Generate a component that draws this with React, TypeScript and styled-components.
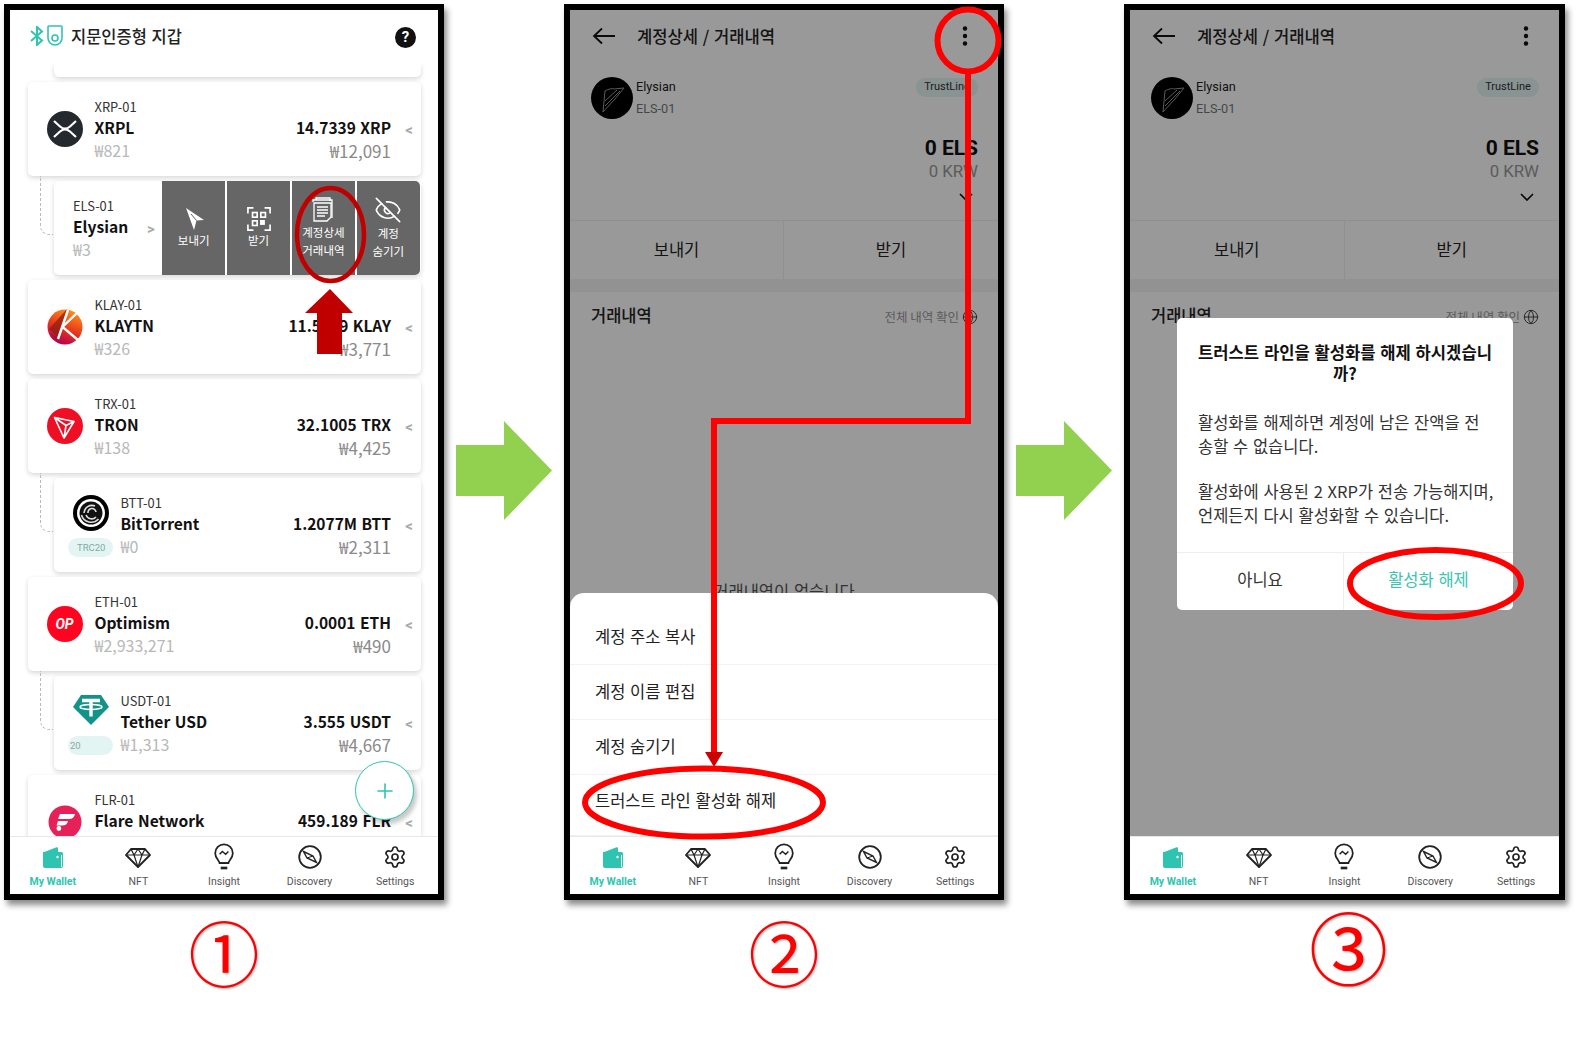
import React from "react";
import styled, { createGlobalStyle } from "styled-components";
import { EyeOff, Settings, Plus, Globe } from "lucide-react";

const KR = `"Noto Sans CJK KR", "Noto Sans", sans-serif`;
const RB = `Roboto, "Noto Sans CJK KR", sans-serif`;
const TEAL = "#2fc4b2";

const Global = createGlobalStyle`
  html, body { margin: 0; padding: 0; background: #fff; overflow: hidden; }
  * { box-sizing: border-box; }
`;

const Stage = styled.div`
  position: relative;
  width: 1578px;
  height: 1042px;
  padding: 4px;
  display: flex;
  align-items: flex-start;
  gap: 12px;
  background: #fff;
  font-family: ${KR};
  word-spacing: 1px;
`;
const Column = styled.div`
  display: flex;
  flex-direction: column;
  align-items: center;
`;
const Phone = styled.div<{ $w?: number }>`
  width: ${(p) => p.$w ?? 440}px;
  height: 896px;
  border: 6px solid #000;
  background: #fff;
  box-shadow: 3px 5px 6px rgba(0, 0, 0, 0.45);
  display: flex;
  flex-direction: column;
  overflow: hidden;
`;
const Main = styled.div`
  position: relative;
  flex: 1;
  min-height: 0;
  display: flex;
  flex-direction: column;
  overflow: hidden;
`;
const Caption = styled.div<{ $size: number; $shift: number; $top: number }>`
  margin-top: ${(p) => p.$top}px;
  margin-left: ${(p) => p.$shift}px;
  font-family: ${KR};
  font-size: ${(p) => p.$size}px;
  line-height: 1;
  color: #f00;
  text-shadow: 1px 1px 2px rgba(0, 0, 0, 0.3);
`;
const FlowArrow = styled.svg`
  flex: none;
  margin-top: 417px;
`;

/* ---------- app bar ---------- */
const AppBar = styled.header`
  flex: none;
  height: 54px;
  display: flex;
  align-items: center;
  padding: 0 22px 3px 22px;
  background: #fff;
`;
const BrandTitle = styled.h1`
  flex: 1;
  margin: 0 0 0 8px;
  font-size: 16.5px;
  font-weight: 500;
  color: #222;
`;
const Help = styled.div`
  width: 21px;
  height: 21px;
  margin-top: 4px;
  border-radius: 50%;
  background: #111;
  color: #fff;
  font: 700 15px/21px ${RB};
  text-align: center;
`;
const BackTitle = styled.h1`
  flex: 1;
  margin: 0 0 0 21px;
  font-size: 16.6px;
  font-weight: 500;
  color: #222;
`;

/* ---------- list ---------- */
const List = styled.div`
  position: relative;
  flex: 1;
  min-height: 0;
  overflow: hidden;
  padding: 0 17px 0 18px;
  display: flex;
  flex-direction: column;
  gap: 5px;
`;
const Card = styled.div<{ $child?: boolean; $stub?: boolean }>`
  position: relative;
  flex: none;
  height: ${(p) => (p.$stub ? 13 : 94)}px;
  margin-left: ${(p) => (p.$child ? 26 : 0)}px;
  background: #fff;
  border-radius: ${(p) => (p.$stub ? "0 0 5px 5px" : "5px")};
  box-shadow: 0 2px 5px rgba(0, 0, 0, 0.16);
  display: flex;
  ${(p) =>
    p.$child && !p.$stub
      ? `&::before {
    content: "";
    position: absolute;
    left: -14px;
    top: -5px;
    width: 12px;
    height: 58px;
    border-left: 1px dashed #bbb;
    border-bottom: 1px dashed #bbb;
    border-bottom-left-radius: 9px;
  }`
      : ""}
`;
const IconCol = styled.div<{ $child?: boolean }>`
  flex: none;
  width: 66.5px;
  padding-left: ${(p) => (p.$child ? 14 : 18.5)}px;
  padding-top: ${(p) => (p.$child ? 17 : 29)}px;
  display: flex;
  flex-direction: column;
`;
const IconSlot = styled.div<{ $child?: boolean }>`
  width: 36px;
  height: 36px;
  margin-left: ${(p) => (p.$child ? 5 : 0)}px;
`;
const Badge = styled.div`
  width: 45px;
  height: 19px;
  margin-top: 7px;
  border-radius: 10px;
  background: #e3f5f3;
  color: #85a8a4;
  font: 400 9.5px/19px ${RB};
  padding-left: 9px;
`;
const BadgeShort = styled(Badge)`
  padding-left: 2px;
`;
const Info = styled.div`
  flex: 1;
  min-width: 0;
  padding-top: 16px;
`;
const Label = styled.div`
  font-size: 12.9px;
  line-height: 18px;
  color: #333;
`;
const Name = styled.div`
  font-size: 15.6px;
  font-weight: 700;
  line-height: 23px;
  color: #111;
`;
const Krw = styled.div`
  font-size: 16px;
  line-height: 22px;
  color: #b8b8b8;
`;
const Right = styled.div`
  flex: none;
  padding-top: 34px;
  text-align: right;
`;
const Amount = styled.div`
  font-size: 15.5px;
  font-weight: 700;
  line-height: 23px;
  color: #111;
`;
const SubValue = styled.div`
  font-size: 17px;
  line-height: 23px;
  color: #8a8a8a;
`;
const Chevron = styled.div`
  flex: none;
  width: 30px;
  padding: 36px 0 0 6px;
  text-align: center;
  font: 700 15px/24px ${RB};
  color: #aaa;
`;
const SwipeInfo = styled.div`
  flex: none;
  width: 93px;
  padding: 16px 0 0 19px;
`;
const SwipeChevron = styled.div`
  flex: none;
  width: 15px;
  padding-top: 36px;
  font: 700 15px/24px ${RB};
  color: #aaa;
`;
const Actions = styled.div`
  flex: 1;
  margin-right: 1px;
  display: grid;
  grid-template-columns: repeat(4, 1fr);
  gap: 1.5px;
`;
const Action = styled.div<{ $last?: boolean }>`
  background: #666;
  color: #fff;
  font-size: 11.5px;
  line-height: 17.5px;
  text-align: center;
  display: flex;
  flex-direction: column;
  align-items: center;
  justify-content: center;
  gap: 1px;
  border-radius: ${(p) => (p.$last ? "0 5px 5px 0" : "0")};
`;
const Fab = styled.div`
  position: absolute;
  left: 345px;
  top: 697px;
  width: 59px;
  height: 59px;
  border-radius: 50%;
  border: 1px solid ${TEAL};
  background: #fff;
  color: ${TEAL};
  box-shadow: 3px 4px 4px rgba(0, 0, 0, 0.22);
  display: flex;
  align-items: center;
  justify-content: center;
`;

/* ---------- nav ---------- */
const Nav = styled.nav`
  flex: none;
  height: 58px;
  display: grid;
  grid-template-columns: repeat(5, 1fr);
  background: #fff;
  border-top: 1px solid #e8e8e8;
  word-spacing: 0;
`;
const NavItem = styled.div<{ $active?: boolean }>`
  display: flex;
  flex-direction: column;
  align-items: center;
  padding-top: 7px;
  font-family: ${RB};
  font-size: 10.5px;
  line-height: 14px;
  font-weight: ${(p) => (p.$active ? 700 : 400)};
  color: ${(p) => (p.$active ? TEAL : "#555")};
`;
const NavIcon = styled.div`
  height: 26px;
  margin-bottom: 5px;
  display: flex;
  align-items: center;
  color: #222;
`;

/* ---------- detail ---------- */
const AccountRow = styled.div`
  flex: none;
  margin-top: 13px;
  padding: 0 20px 0 21px;
  display: flex;
  align-items: flex-start;
  height: 42px;
`;
const AccountText = styled.div`
  flex: 1;
  margin-left: 3px;
  font-family: ${RB};
`;
const AccountName = styled.div`
  font-size: 12.7px;
  line-height: 20px;
  color: #222;
`;
const AccountCode = styled.div`
  font-size: 12.7px;
  line-height: 24px;
  color: #777;
`;
const Pill = styled.div`
  margin-top: 1px;
  width: 62px;
  height: 19px;
  border-radius: 10px;
  background: #e3f5f3;
  color: #333;
  font: 400 11px/18px ${RB};
  text-align: center;
`;
const Balance = styled.div`
  flex: none;
  height: 101px;
  padding: 16px 20px 0 0;
  text-align: right;
  font-family: ${RB};
  word-spacing: 0;
`;
const BalanceMain = styled.div`
  font-size: 21px;
  font-weight: 700;
  line-height: 26px;
  color: #111;
`;
const BalanceSub = styled.div`
  font-size: 16.8px;
  line-height: 20px;
  color: #999;
`;
const BalanceChevron = styled.div`
  padding: 12px 5px 0 0;
  display: flex;
  justify-content: flex-end;
`;
const TwoButtons = styled.div`
  flex: none;
  height: 59px;
  display: grid;
  grid-template-columns: 1fr 1fr;
  border-top: 1px solid #eee;
  font-size: 16.5px;
  color: #222;
`;
const TwoButton = styled.div<{ $divider?: boolean }>`
  display: flex;
  align-items: center;
  justify-content: center;
  padding-bottom: 2px;
  border-right: ${(p) => (p.$divider ? "1px solid #eee" : "none")};
`;
const Band = styled.div`
  flex: none;
  height: 13px;
  background: #f3f3f3;
`;
const SectionHead = styled.div`
  flex: none;
  display: flex;
  align-items: center;
  justify-content: space-between;
  padding: 11px 20px 0 21px;
`;
const SectionTitle = styled.div`
  font-size: 16.5px;
  font-weight: 500;
  color: #222;
`;
const AllLink = styled.div`
  display: flex;
  align-items: center;
  gap: 3px;
  margin-top: 3px;
  font-size: 12.5px;
  word-spacing: 0;
  color: #999;
`;
const Empty = styled.div`
  flex: none;
  margin-top: 252px;
  text-align: center;
  font-size: 16.5px;
  color: #555;
`;
const Dim = styled.div`
  position: absolute;
  inset: 0;
  background: rgba(0, 0, 0, 0.4);
`;
const Sheet = styled.div`
  position: absolute;
  left: 0;
  right: 0;
  bottom: 0;
  height: 243px;
  background: #fff;
  border-radius: 14px 14px 0 0;
  padding-top: 17px;
  display: flex;
  flex-direction: column;
`;
const SheetRow = styled.div`
  flex: none;
  height: 55px;
  display: flex;
  align-items: center;
  padding: 0 0 3px 25px;
  font-size: 16.5px;
  color: #222;
  border-bottom: 1.5px solid #f2f2f2;
  &:last-child {
    flex: 1;
    padding-bottom: 11px;
  }
`;
const Dialog = styled.div`
  position: absolute;
  left: 47px;
  top: 308px;
  width: 336px;
  height: 292px;
  background: #fff;
  border-radius: 5px;
  display: flex;
  flex-direction: column;
`;
const DialogTitle = styled.div`
  padding: 24px 10px 0;
  text-align: center;
  font-size: 16.6px;
  font-weight: 700;
  line-height: 21px;
  color: #111;
`;
const DialogBody = styled.div`
  flex: 1;
  padding: 27px 10px 0 21px;
  font-size: 16.5px;
  line-height: 23.7px;
  color: #333;
`;
const Para = styled.p`
  margin: 0 0 22px;
`;
const DialogFoot = styled.div`
  flex: none;
  height: 58px;
  display: grid;
  grid-template-columns: 167px 1fr;
  border-top: 1px solid #eee;
  font-size: 16.5px;
`;
const FootBtn = styled.div<{ $primary?: boolean; $divider?: boolean }>`
  display: flex;
  align-items: center;
  justify-content: center;
  padding-bottom: 5px;
  color: ${(p) => (p.$primary ? "#3cc4b3" : "#333")};
  border-right: ${(p) => (p.$divider ? "1px solid #eee" : "none")};
`;
const Overlay = styled.svg`
  position: absolute;
  left: 0;
  top: 0;
  pointer-events: none;
`;
const OpCircle = styled.div`
  width: 36px;
  height: 36px;
  border-radius: 50%;
  background: #ff0420;
  color: #fff;
  font: italic 700 14px/36px ${RB};
  text-align: center;
`;

/* ---------- drawings ---------- */
const XrpLogo = () => (
  <svg width="36" height="36" viewBox="0 0 36 36">
    <circle cx="18" cy="18" r="18" fill="#23292f" />
    <path d="M7 10l6 5.5c3 2.7 7 2.7 10 0l6-5.5M7 26l6-5.5c3-2.7 7-2.7 10 0l6 5.5" fill="none" stroke="#fff" strokeWidth="2.2" />
  </svg>
);
const KlayLogo = () => (
  <svg width="36" height="36" viewBox="0 0 36 36">
    <defs>
      <linearGradient id="klayGrad" x1="0.8" y1="0" x2="0.4" y2="1">
        <stop offset="0" stopColor="#ff9a1f" />
        <stop offset="0.55" stopColor="#e8391a" />
        <stop offset="1" stopColor="#b5004e" />
      </linearGradient>
    </defs>
    <circle cx="18" cy="18" r="17.5" fill="url(#klayGrad)" />
    <path d="M2 20L20 0L11 28ZM4 24l7 5-3 1z" fill="#8f1d10" opacity=".75" />
    <path d="M21 1L11 30M30 4L15.5 18L31 31" fill="none" stroke="#fff" strokeWidth="2.4" />
  </svg>
);
const TronLogo = () => (
  <svg width="36" height="36" viewBox="0 0 36 36">
    <circle cx="18" cy="18" r="18" fill="#ef0f24" />
    <path d="M7.5 9.5L27 13.5L17 30ZM7.5 9.5L19 17.5L27 13.5M19 17.5L17 30" fill="none" stroke="#fff" strokeWidth="1.6" strokeLinejoin="round" />
  </svg>
);
const BttLogo = () => (
  <svg width="36" height="36" viewBox="0 0 36 36">
    <circle cx="18" cy="18" r="18" fill="#000" />
    <circle cx="18" cy="18" r="14" fill="#fff" />
    <circle cx="18" cy="18" r="11.5" fill="#111" />
    <path d="M8.5 20a10 10 0 0 0 17 4M11 18a8 8 0 0 1 11-7M13 20a6 6 0 0 0 10 2M15 18a4 4 0 0 1 8-1" fill="none" stroke="#ddd" strokeWidth="1.6" />
  </svg>
);
const UsdtLogo = () => (
  <svg width="36" height="36" viewBox="0 0 36 36">
    <path d="M8 2h20l8 12L18 32L0 14Z" fill="#12938a" />
    <path d="M9 7.5h18M18 7.5v16" stroke="#fff" strokeWidth="3.4" fill="none" />
    <ellipse cx="18" cy="14" rx="11" ry="2.4" fill="none" stroke="#fff" strokeWidth="1.5" />
  </svg>
);
const FlareLogo = () => (
  <svg width="36" height="36" viewBox="0 0 36 36">
    <circle cx="18" cy="18" r="16.5" fill="#e62058" />
    <path d="M13 10h15c-.6 3-2.5 5-6 5H11zM11 17h10c-.6 3-2.5 4.5-6 4.5H9.5zM9.5 24.5a2.4 2.4 0 1 0 4.8 0a2.4 2.4 0 1 0-4.8 0" fill="#fff" />
  </svg>
);
const ElysianLogo = () => (
  <svg width="42" height="42" viewBox="0 0 42 42" style={{ flex: "none" }}>
    <circle cx="21" cy="21" r="21" fill="#000" />
    <path d="M14 14c3-2 8-3 9-2l10-1-9 11-12 13zM14 24l12-11M14 29l15-15" fill="none" stroke="#999" strokeWidth="1" />
  </svg>
);
const SendIcon = () => (
  <svg width="24" height="24" viewBox="0 0 24 24">
    <path d="M4 1l18 12-7.5 .5L12 23z" fill="#fff" />
    <path d="M9 7l5.5 6.5" stroke="#666" strokeWidth="1" />
  </svg>
);
const QrIcon = () => (
  <svg width="24" height="24" viewBox="0 0 26 26" fill="none" stroke="#fff" strokeWidth="1.8">
    <path d="M1 7V1h6M19 1h6v6M25 19v6h-6M7 25H1v-6" />
    <rect x="6" y="6" width="5" height="5" />
    <rect x="15" y="6" width="5" height="5" />
    <rect x="6" y="15" width="5" height="5" />
    <rect x="15" y="15" width="3.5" height="3.5" fill="#fff" />
  </svg>
);
const DocsIcon = () => (
  <svg width="24" height="26" viewBox="0 0 24 26" fill="none" stroke="#fff" strokeWidth="1.3">
    <path d="M5 3V1h14v3M2 5V3h19v18" />
    <path d="M3 6h17v14l-4 4H3z" />
    <path d="M6 10h11M6 13h11M6 16h11M6 19h8" />
  </svg>
);
const BtIcon = () => (
  <svg width="15" height="20" viewBox="0 0 15 20" fill="none" stroke={TEAL} strokeWidth="2" style={{ marginLeft: -2 }}>
    <path d="M1 5l11 9.5L7 19V1l5 4.5L1 15" />
  </svg>
);
const DeviceIcon = () => (
  <svg width="16" height="21" viewBox="0 0 16 21" fill="none" stroke={TEAL} strokeWidth="1.6" style={{ marginLeft: 2 }}>
    <path d="M2 1h12a1 1 0 0 1 1 1v11a7 7 0 0 1-14 0V2a1 1 0 0 1 1-1z" />
    <circle cx="8" cy="13" r="3" />
  </svg>
);
const BackArrow = () => (
  <svg width="24" height="18" viewBox="0 0 24 18" fill="none" stroke="#111" strokeWidth="1.8" style={{ flex: "none" }}>
    <path d="M23 9H2M10 1.5L2 9l8 7.5" />
  </svg>
);
const Kebab = () => (
  <svg width="6" height="20" viewBox="0 0 6 20" fill="#111" style={{ marginRight: 8 }}>
    <circle cx="3" cy="2.5" r="2.2" />
    <circle cx="3" cy="10" r="2.2" />
    <circle cx="3" cy="17.5" r="2.2" />
  </svg>
);
const WalletIcon = () => (
  <svg width="22" height="23" viewBox="0 0 22 23">
    <path d="M1 6.5L14.5 1.2a1.2 1.2 0 0 1 1.5 1V7H1z" fill={TEAL} />
    <path d="M1 6h18.5a1.5 1.5 0 0 1 1.5 1.5V20a2 2 0 0 1-2 2H3a2 2 0 0 1-2-2z" fill={TEAL} />
    <path d="M19.5 9v12" stroke="#fff" strokeWidth="1" />
    <circle cx="15.5" cy="11" r="1.2" fill="#fff" />
  </svg>
);
const GemIcon = () => (
  <svg width="26" height="21" viewBox="0 0 26 21" fill="none" stroke="#222" strokeWidth="1.8" strokeLinejoin="round">
    <path d="M6 2h14l5 6-12 12L1 8z" />
    <path d="M1 8h24M9 8l4 12 4-12M6 2l3 6 4-6 4 6 3-6" strokeWidth="1.2" />
  </svg>
);
const BulbIcon = () => (
  <svg width="22" height="28" viewBox="0 0 20 25" fill="none" stroke="#222" strokeWidth="1.6">
    <path d="M6 18c0-2-4-4-4-9a8 8 0 0 1 16 0c0 5-4 7-4 9z" />
    <path d="M6 18h8" />
    <path d="M7 22.5h6" strokeWidth="2.4" />
    <path d="M6 10l2.5-2.5 3 2.5L14 7.5" strokeWidth="1.4" />
  </svg>
);
const CompassIcon = () => (
  <svg width="24" height="24" viewBox="0 0 24 24" fill="none" stroke="#222" strokeWidth="1.8">
    <circle cx="12" cy="12" r="10.8" />
    <path d="M5.5 6.5L15 11l3.5 6.5L9 13z" strokeWidth="1.4" />
    <path d="M9 13l6-2" strokeWidth="1" />
  </svg>
);

const BottomNav = () => (
  <Nav>
    <NavItem $active>
      <NavIcon><WalletIcon /></NavIcon>My Wallet
    </NavItem>
    <NavItem>
      <NavIcon><GemIcon /></NavIcon>NFT
    </NavItem>
    <NavItem>
      <NavIcon><BulbIcon /></NavIcon>Insight
    </NavItem>
    <NavItem>
      <NavIcon><CompassIcon /></NavIcon>Discovery
    </NavItem>
    <NavItem>
      <NavIcon><Settings size={24} strokeWidth={1.7} /></NavIcon>Settings
    </NavItem>
  </Nav>
);

type Row = {
  logo: React.ReactNode;
  label: string;
  name: string;
  krw: string;
  amount: string;
  value: string;
  child?: boolean;
  badge?: React.ReactNode;
};

const rowsBefore: Row[] = [
  { logo: <XrpLogo />, label: "XRP-01", name: "XRPL", krw: "₩821", amount: "14.7339 XRP", value: "₩12,091" },
];
const rowsAfter: Row[] = [
  { logo: <KlayLogo />, label: "KLAY-01", name: "KLAYTN", krw: "₩326", amount: "11.5579 KLAY", value: "₩3,771" },
  { logo: <TronLogo />, label: "TRX-01", name: "TRON", krw: "₩138", amount: "32.1005 TRX", value: "₩4,425" },
  { logo: <BttLogo />, label: "BTT-01", name: "BitTorrent", krw: "₩0", amount: "1.2077M BTT", value: "₩2,311", child: true, badge: <Badge>TRC20</Badge> },
  { logo: <OpCircle>OP</OpCircle>, label: "ETH-01", name: "Optimism", krw: "₩2,933,271", amount: "0.0001 ETH", value: "₩490" },
  { logo: <UsdtLogo />, label: "USDT-01", name: "Tether USD", krw: "₩1,313", amount: "3.555 USDT", value: "₩4,667", child: true, badge: <BadgeShort>20</BadgeShort> },
  { logo: <FlareLogo />, label: "FLR-01", name: "Flare Network", krw: "", amount: "459.189 FLR", value: "" },
];

const AssetCard = ({ r }: { r: Row }) => (
  <Card $child={r.child}>
    <IconCol $child={r.child}>
      <IconSlot $child={r.child}>{r.logo}</IconSlot>
      {r.badge}
    </IconCol>
    <Info>
      <Label>{r.label}</Label>
      <Name>{r.name}</Name>
      <Krw>{r.krw}</Krw>
    </Info>
    <Right>
      <Amount>{r.amount}</Amount>
      <SubValue>{r.value}</SubValue>
    </Right>
    <Chevron>&lt;</Chevron>
  </Card>
);

const WalletScreen = () => (
  <Phone>
    <Main>
      <AppBar>
        <BtIcon />
        <DeviceIcon />
        <BrandTitle>지문인증형 지갑</BrandTitle>
        <Help>?</Help>
      </AppBar>
      <List>
        <Card $child $stub />
        {rowsBefore.map((r) => (
          <AssetCard key={r.label} r={r} />
        ))}
        <Card $child>
          <SwipeInfo>
            <Label>ELS-01</Label>
            <Name>Elysian</Name>
            <Krw>₩3</Krw>
          </SwipeInfo>
          <SwipeChevron>&gt;</SwipeChevron>
          <Actions>
            <Action>
              <SendIcon />
              보내기
            </Action>
            <Action>
              <QrIcon />
              받기
            </Action>
            <Action>
              <DocsIcon />
              <span>계정상세<br />거래내역</span>
            </Action>
            <Action $last>
              <EyeOff size={28} strokeWidth={1.4} />
              <span>계정<br />숨기기</span>
            </Action>
          </Actions>
        </Card>
        {rowsAfter.map((r) => (
          <AssetCard key={r.label} r={r} />
        ))}
        <Fab>
          <Plus size={24} strokeWidth={1.6} />
        </Fab>
      </List>
    </Main>
    <BottomNav />
  </Phone>
);

const DetailPage = ({ empty }: { empty?: boolean }) => (
  <>
    <AppBar>
      <BackArrow />
      <BackTitle>계정상세 / 거래내역</BackTitle>
      <Kebab />
    </AppBar>
    <AccountRow>
      <ElysianLogo />
      <AccountText>
        <AccountName>Elysian</AccountName>
        <AccountCode>ELS-01</AccountCode>
      </AccountText>
      <Pill>TrustLine</Pill>
    </AccountRow>
    <Balance>
      <BalanceMain>0 ELS</BalanceMain>
      <BalanceSub>0 KRW</BalanceSub>
      <BalanceChevron>
        <svg width="14" height="8" viewBox="0 0 14 8" fill="none" stroke="#111" strokeWidth="1.7">
          <path d="M1 1l6 6 6-6" />
        </svg>
      </BalanceChevron>
    </Balance>
    <TwoButtons>
      <TwoButton $divider>보내기</TwoButton>
      <TwoButton>받기</TwoButton>
    </TwoButtons>
    <Band />
    <SectionHead>
      <SectionTitle>거래내역</SectionTitle>
      <AllLink>
        전체 내역 확인 <Globe size={16} strokeWidth={1.5} color="#444" />
      </AllLink>
    </SectionHead>
    {empty && <Empty>거래내역이 없습니다</Empty>}
  </>
);

const SheetScreen = () => (
  <Phone>
    <Main>
      <DetailPage empty />
      <Dim />
      <Sheet>
        <SheetRow>계정 주소 복사</SheetRow>
        <SheetRow>계정 이름 편집</SheetRow>
        <SheetRow>계정 숨기기</SheetRow>
        <SheetRow>트러스트 라인 활성화 해제</SheetRow>
      </Sheet>
    </Main>
    <BottomNav />
  </Phone>
);

const DialogScreen = () => (
  <Phone $w={441}>
    <Main>
      <DetailPage />
      <Dim />
      <Dialog>
        <DialogTitle>
          트러스트 라인을 활성화를 해제 하시겠습니
          <br />
          까?
        </DialogTitle>
        <DialogBody>
          <Para>
            활성화를 해제하면 계정에 남은 잔액을 전
            <br />
            송할 수 없습니다.
          </Para>
          <Para>
            활성화에 사용된 2 XRP가 전송 가능해지며,
            <br />
            언제든지 다시 활성화할 수 있습니다.
          </Para>
        </DialogBody>
        <DialogFoot>
          <FootBtn $divider>아니요</FootBtn>
          <FootBtn $primary>활성화 해제</FootBtn>
        </DialogFoot>
      </Dialog>
    </Main>
    <BottomNav />
  </Phone>
);

const Step = () => (
  <FlowArrow width="96" height="99" viewBox="0 0 96 99">
    <path d="M0 24H48V0L96 49.5L48 99V75H0Z" fill="#92d050" />
  </FlowArrow>
);

export default function App() {
  return (
    <Stage>
      <Global />
      <Column>
        <WalletScreen />
        <Caption $size={71} $shift={0} $top={15}>①</Caption>
      </Column>
      <Step />
      <Column>
        <SheetScreen />
        <Caption $size={71} $shift={0} $top={15}>②</Caption>
      </Column>
      <Step />
      <Column>
        <DialogScreen />
        <Caption $size={79} $shift={8} $top={6}>③</Caption>
      </Column>
      <Overlay width="1578" height="1042" viewBox="0 0 1578 1042" fill="none">
        <ellipse cx="330.5" cy="234.5" rx="33.5" ry="46.5" stroke="#c00000" strokeWidth="4.5" />
        <path d="M330 289L353 313H342V354H317V313H305Z" fill="#c00000" />
        <ellipse cx="968" cy="40.5" rx="30.5" ry="31" stroke="#f00" strokeWidth="6" />
        <path d="M968 72V421H714V754" stroke="#f00" strokeWidth="6" />
        <path d="M705 752H723L714 767Z" fill="#c00" />
        <ellipse cx="704" cy="802.5" rx="119" ry="34" stroke="#f00" strokeWidth="6" />
        <ellipse cx="1435.5" cy="583.5" rx="85.5" ry="33.5" stroke="#f00" strokeWidth="6" />
      </Overlay>
    </Stage>
  );
}
